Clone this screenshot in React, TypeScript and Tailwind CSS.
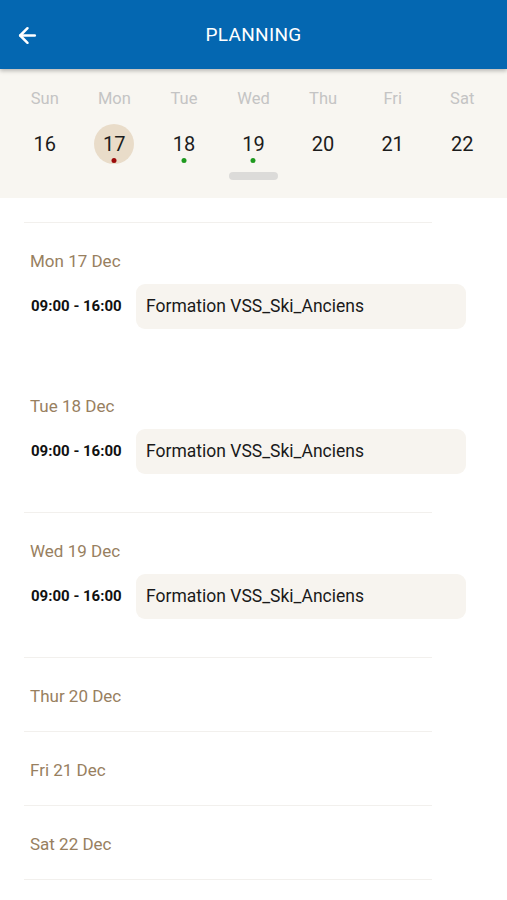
import React from 'react';
import { ArrowLeft } from 'lucide-react';

type Day = { name: string; num: number; dot?: 'red' | 'green'; selected?: boolean };

const week: Day[] = [
  { name: 'Sun', num: 16 },
  { name: 'Mon', num: 17, dot: 'red', selected: true },
  { name: 'Tue', num: 18, dot: 'green' },
  { name: 'Wed', num: 19, dot: 'green' },
  { name: 'Thu', num: 20 },
  { name: 'Fri', num: 21 },
  { name: 'Sat', num: 22 },
];

type Section = { label: string; event?: string; line: boolean };

const sections: Section[] = [
  { label: 'Mon 17 Dec', event: 'Formation VSS_Ski_Anciens', line: true },
  { label: 'Tue 18 Dec', event: 'Formation VSS_Ski_Anciens', line: false },
  { label: 'Wed 19 Dec', event: 'Formation VSS_Ski_Anciens', line: true },
  { label: 'Thur 20 Dec', line: true },
  { label: 'Fri 21 Dec', line: true },
  { label: 'Sat 22 Dec', line: true },
];

export default function App() {
  return (
    <div className="w-[507px] h-[900px] overflow-hidden bg-white font-['Roboto',sans-serif]">
      {/* Top bar */}
      <div className="relative z-10 h-[69px] pt-[2px] bg-[#0467b1] shadow-[0_2px_4px_rgba(0,0,0,0.25)] flex items-center">
        <div className="w-[55px] pl-[15px] flex items-center">
          <ArrowLeft size={25} strokeWidth={2.4} className="text-white" />
        </div>
        <div className="flex-1 text-center text-white text-[19px] tracking-[0.3px] pr-[55px]">PLANNING</div>
      </div>

      {/* Week strip */}
      <div className="bg-[#f8f6f1] px-[10px] pt-[20px] pb-[18px] flex flex-col">
        <div className="grid grid-cols-7">
          {week.map((d) => (
            <div key={d.name} className="h-5 flex items-center justify-center text-[16.5px] text-[#c4c4c4]">
              {d.name}
            </div>
          ))}
        </div>
        <div className="grid grid-cols-7 mt-[15px]">
          {week.map((d) => (
            <div key={d.num} className="flex justify-center">
              <div
                className={
                  'relative w-10 h-10 rounded-full flex items-center justify-center text-[20px] text-[#1c1c1c] ' +
                  (d.selected ? 'bg-[#e9dcc9]' : '')
                }
              >
                {d.num}
                {d.dot === 'red' && (
                  <span className="absolute bottom-[1px] left-1/2 -translate-x-1/2 w-[5px] h-[5px] rounded-full bg-[#9b0a0a]" />
                )}
                {d.dot === 'green' && (
                  <span className="absolute bottom-[1px] left-1/2 -translate-x-1/2 w-[5px] h-[5px] rounded-full bg-[#1f9a1f]" />
                )}
              </div>
            </div>
          ))}
        </div>
        <div className="mt-[8px] self-center w-[49px] h-2 rounded-full bg-[#dcdbd9]" />
      </div>

      {/* Day list */}
      <div className="pt-[24px]">
        {sections.map((s) => (
          <div key={s.label}>
            <div className={'ml-6 w-[408px] h-px ' + (s.line ? 'bg-[#f2f0ed]' : 'bg-transparent')} />
            <div className={'pt-[29px] ' + (s.event ? 'pb-[38px]' : 'pb-[24px]')}>
              <div className="h-5 pl-[30px] flex items-center text-[17px] text-[#98805f]">{s.label}</div>
              {s.event && (
                <div className="mt-[12px] flex items-center">
                  <div className="w-[136px] pl-[31px] text-[15px] font-bold text-[#111]">09:00 - 16:00</div>
                  <div className="w-[330px] h-[45px] rounded-[9px] bg-[#f7f4ef] flex items-center pl-[10px] text-[17.5px] text-[#1a1a1a]">
                    {s.event}
                  </div>
                </div>
              )}
            </div>
          </div>
        ))}
        <div className="ml-6 w-[408px] h-px bg-[#f2f0ed]" />
      </div>
    </div>
  );
}
